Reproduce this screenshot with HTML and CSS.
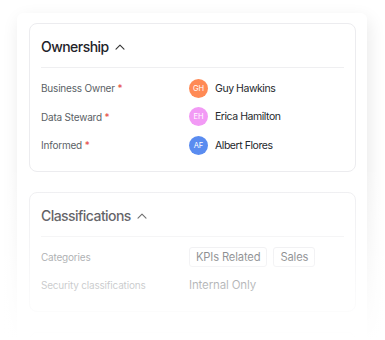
FILE: index.html
```html
<!DOCTYPE html>
<html>
<head>
<meta charset="utf-8">
<link rel="stylesheet" href="styles.css">
</head>
<body>
<div class="stage">
  <div class="panel">
    <section class="card">
      <header class="card-head">
        <h2 class="card-title">Ownership</h2>
        <svg class="chev" viewBox="0 0 10 6" width="10" height="6"><path d="M1 5.2 L5 1.2 L9 5.2" fill="none" stroke="currentColor" stroke-width="1.1" stroke-linecap="round" stroke-linejoin="round"/></svg>
      </header>
      <div class="rows">
        <div class="row">
          <span class="label">Business Owner <span class="req">*</span></span>
          <span class="value person"><span class="avatar a-orange">GH</span>Guy Hawkins</span>
        </div>
        <div class="row">
          <span class="label">Data Steward <span class="req">*</span></span>
          <span class="value person"><span class="avatar a-pink">EH</span>Erica Hamilton</span>
        </div>
        <div class="row">
          <span class="label">Informed <span class="req">*</span></span>
          <span class="value person"><span class="avatar a-blue">AF</span>Albert Flores</span>
        </div>
      </div>
    </section>
    <section class="card">
      <header class="card-head">
        <h2 class="card-title">Classifications</h2>
        <svg class="chev" viewBox="0 0 10 6" width="10" height="6"><path d="M1 5.2 L5 1.2 L9 5.2" fill="none" stroke="currentColor" stroke-width="1.1" stroke-linecap="round" stroke-linejoin="round"/></svg>
      </header>
      <div class="rows">
        <div class="row">
          <span class="label">Categories</span>
          <span class="value chips"><span class="chip">KPIs Related</span><span class="chip">Sales</span></span>
        </div>
        <div class="row">
          <span class="label">Security classifications</span>
          <span class="value plain">Internal Only</span>
        </div>
      </div>
    </section>
    <section class="card card-next"></section>
  </div>
  <div class="fade"></div>
</div>
</body>
</html>
```
FILE: styles.css
```css
* { box-sizing: border-box; }
html, body { margin: 0; padding: 0; background: #fff; }
body {
  font-family: Inter, "Noto Sans", sans-serif;
  color: #1f2329;
  width: 385px;
  height: 340px;
  overflow: hidden;
}
.stage {
  position: relative;
  height: 340px;
  overflow: hidden;
  padding: 13px 18px 0 17px;
}
.panel {
  background: #fff;
  border-radius: 6px;
  box-shadow: 2px 6px 18px rgba(0, 0, 0, 0.09);
  padding: 10px 11px 0 12px;
  display: flex;
  flex-direction: column;
  gap: 20px;
  height: 380px;
}
.card {
  border: 1px solid #ececef;
  border-radius: 8px;
  padding: 0 11px 0 11px;
}
.card-head {
  display: flex;
  align-items: center;
  gap: 6px;
  height: 44px;
  border-bottom: 1px solid #efeff1;
  padding-top: 2px;
}
.card-title {
  margin: 0;
  font-size: 14px;
  font-weight: 500;
  letter-spacing: -0.55px;
  color: #1f2329;
}
.chev { color: #333; margin-top: 1px; }
.rows {
  display: flex;
  flex-direction: column;
  padding: 6px 0 11px;
}
.row {
  display: grid;
  grid-template-columns: 148px 1fr;
  align-items: center;
  height: 28.5px;
}
.label {
  font-size: 10px;
  letter-spacing: -0.2px;
  color: #5b5f66;
}
.req { color: #e5483f; }
.value { font-size: 10.5px; letter-spacing: -0.45px; color: #24272c; }
.person { display: flex; align-items: center; gap: 7px; font-weight: 400; }
.avatar {
  width: 19px;
  height: 19px;
  border-radius: 50%;
  color: #fff;
  font-size: 7.5px;
  font-weight: 400;
  letter-spacing: 0;
  display: inline-flex;
  align-items: center;
  justify-content: center;
}
.a-orange { background: #ff8a55; }
.a-pink { background: #f29af5; }
.a-blue { background: #5a8cf0; }
.chips { display: flex; gap: 6px; }
.chip {
  border: 1px solid #e6e6ea;
  border-radius: 3px;
  padding: 2px 6px;
  font-size: 11.2px;
  letter-spacing: -0.15px;
}
.plain { font-size: 11.5px; letter-spacing: -0.15px; }
.card-next { height: 40px; flex: none; }
.fade {
  position: absolute;
  left: 0;
  right: 0;
  top: 172px;
  bottom: 0;
  background: linear-gradient(to bottom, rgba(255,255,255,0.1) 0%, rgba(255,255,255,0.4) 40%, rgba(255,255,255,0.7) 70%, rgba(255,255,255,1) 100%);
  pointer-events: none;
}
```
